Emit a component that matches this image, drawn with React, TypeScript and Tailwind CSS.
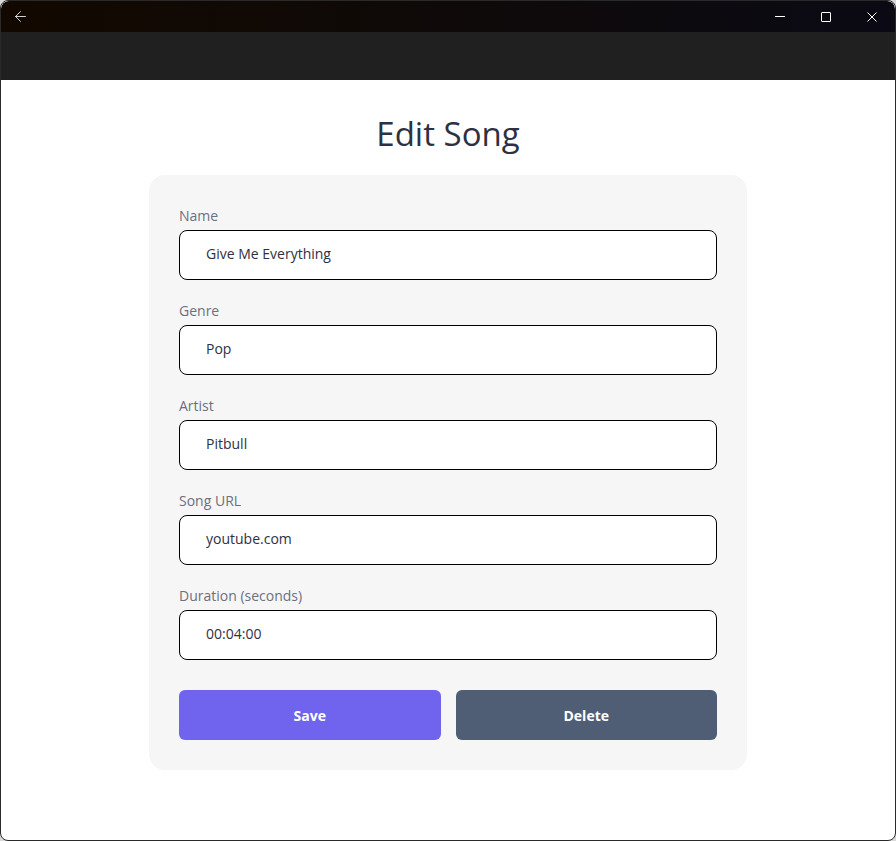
import { ArrowLeft } from "lucide-react";

const fields = [
  { label: "Name", value: "Give Me Everything" },
  { label: "Genre", value: "Pop" },
  { label: "Artist", value: "Pitbull" },
  { label: "Song URL", value: "youtube.com" },
  { label: "Duration (seconds)", value: "00:04:00" },
];

const TitleBar = () => {
  return (
    <div className="h-[31px] flex items-center justify-between bg-gradient-to-r from-[#120800] to-[#0b0a14] rounded-t-lg">
      <div className="w-[38px] h-[31px] flex items-center justify-center text-[#d4d4d4]">
        <ArrowLeft size={17} strokeWidth={1.4} />
      </div>
      <div className="flex h-[31px]">
        <div className="w-[46px] flex items-center justify-center">
          <div className="w-[10px] h-px bg-white" />
        </div>
        <div className="w-[46px] flex items-center justify-center">
          <div className="w-[10px] h-[10px] border border-white rounded-[1px]" />
        </div>
        <div className="w-[46px] flex items-center justify-center">
          <svg width="10" height="10" viewBox="0 0 10 10">
            <path d="M0.5 0.5 L9.5 9.5 M9.5 0.5 L0.5 9.5" stroke="white" strokeWidth="1" />
          </svg>
        </div>
      </div>
    </div>
  );
};

const App = () => {
  return (
    <div className="w-[896px] h-[841px] bg-[#d9d9d9] font-['Open_Sans',sans-serif]">
      <div className="w-[896px] h-[841px] flex flex-col border border-[#2a2a2a] rounded-lg overflow-hidden bg-white">
        <TitleBar />
        <div className="h-12 bg-[#202020]" />
        <main className="flex-1 flex flex-col items-center pt-[30px]">
          <h1 className="text-[33px] leading-[48px] text-[#2d3142] mb-[17px]">
            Edit Song
          </h1>
          <form className="w-[598px] bg-[#f6f6f6] rounded-2xl p-[30px] flex flex-col gap-5">
            {fields.map((field) => (
              <div key={field.label} className="flex flex-col gap-[3px]">
                <label className="text-sm leading-[22px] text-[#6b7080]">
                  {field.label}
                </label>
                <input
                  defaultValue={field.value}
                  className="h-[50px] bg-white border border-black rounded-lg px-[26px] pb-[3px] text-sm text-[#2d3142] outline-none"
                />
              </div>
            ))}
            <div className="flex gap-[15px] mt-[10px]">
              <button
                type="button"
                className="flex-1 h-[50px] rounded-md bg-[#7063ee] text-white text-sm font-bold pt-[2px]"
              >
                Save
              </button>
              <button
                type="button"
                className="flex-1 h-[50px] rounded-md bg-[#4f5d75] text-white text-sm font-bold pt-[2px]"
              >
                Delete
              </button>
            </div>
          </form>
        </main>
      </div>
    </div>
  );
};

export default App;
